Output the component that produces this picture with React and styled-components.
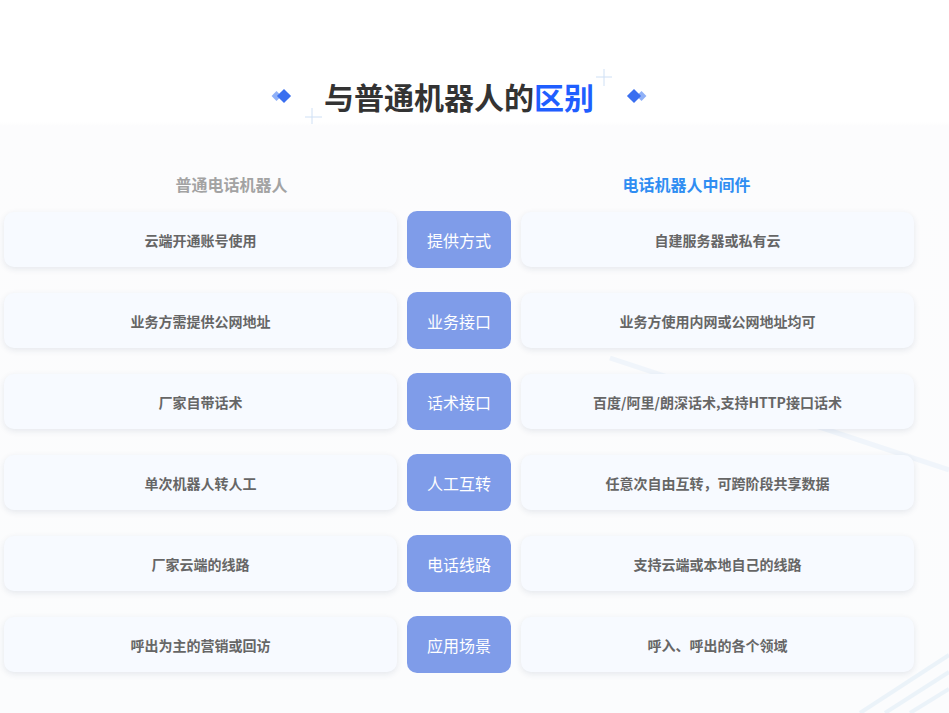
import React from 'react';
import styled, { createGlobalStyle } from 'styled-components';

const GlobalStyle = createGlobalStyle`
  body {
    margin: 0;
    font-family: "Noto Sans CJK SC", "Noto Sans", sans-serif;
    background: #ffffff;
  }
`;

const Page = styled.div`
  position: relative;
  width: 949px;
  height: 713px;
  overflow: hidden;
  background: linear-gradient(180deg, #ffffff 0, #ffffff 122px, #fcfcfd 126px, #fbfcfd 100%);
`;

const Deco = styled.svg`
  position: absolute;
  left: 0;
  top: 0;
  pointer-events: none;
`;

const Content = styled.div`
  position: relative;
  width: 910px;
  margin-left: 4px;
  padding-top: 76px;
`;

const TitleRow = styled.div`
  display: flex;
  align-items: center;
  justify-content: center;
  gap: 32px;
  height: 40px;
`;

const Title = styled.h2`
  margin: 0;
  font-size: 30px;
  line-height: 40px;
  font-weight: 700;
  color: #333333;
  letter-spacing: 0;
`;

const Accent = styled.span`
  color: #1f5eff;
`;

const Diamonds = ({ flip }) => (
  <svg width="22" height="16" viewBox="0 0 22 16" style={{ transform: flip ? 'scaleX(-1)' : 'none' }}>
    <rect x="3" y="4.5" width="7" height="7" transform="rotate(45 6.5 8)" fill="#8fb0f7" />
    <rect x="9" y="3" width="10" height="10" transform="rotate(45 14 8)" fill="#3a6ff0" />
  </svg>
);

const Heads = styled.div`
  display: grid;
  grid-template-columns: 1fr 1fr;
  margin-top: 56px;
`;

const Head = styled.div`
  text-align: center;
  font-size: 16px;
  line-height: 24px;
  font-weight: 700;
  color: ${p => (p.$blue ? '#2f8df2' : '#a3a3a3')};
`;

const Table = styled.div`
  display: grid;
  grid-template-columns: 393px 104px 393px;
  column-gap: 10px;
  row-gap: 24px;
  margin-top: 15px;
`;

const Card = styled.div`
  height: 55px;
  margin-top: 1px;
  border-radius: 10px;
  background: #f7faff;
  box-shadow: 0 2px 6px rgba(30, 50, 90, 0.1);
  display: flex;
  align-items: center;
  justify-content: center;
  font-size: 14px;
  font-weight: 700;
  color: #666666;
`;

const Tag = styled.div`
  height: 57px;
  border-radius: 10px;
  background: #7f9ce9;
  display: flex;
  align-items: center;
  justify-content: center;
  font-size: 16px;
  color: #ffffff;
`;

const rows = [
  ['云端开通账号使用', '提供方式', '自建服务器或私有云'],
  ['业务方需提供公网地址', '业务接口', '业务方使用内网或公网地址均可'],
  ['厂家自带话术', '话术接口', '百度/阿里/朗深话术,支持HTTP接口话术'],
  ['单次机器人转人工', '人工互转', '任意次自由互转，可跨阶段共享数据'],
  ['厂家云端的线路', '电话线路', '支持云端或本地自己的线路'],
  ['呼出为主的营销或回访', '应用场景', '呼入、呼出的各个领域'],
];

export default function App() {
  return (
    <Page>
      <GlobalStyle />
      <Deco width="949" height="713">
        <g stroke="#cfe0f5" strokeWidth="1" fill="none">
          <line x1="596" y1="77" x2="612" y2="77" />
          <line x1="604" y1="69" x2="604" y2="86" />
          <line x1="305" y1="117" x2="322" y2="117" />
          <line x1="312" y1="108" x2="312" y2="124" />
        </g>
        <g stroke="#e6f0fa" strokeWidth="5" opacity="0.5">
          <line x1="610" y1="358" x2="949" y2="470" />
        </g>
        <g stroke="#e2eef8" strokeWidth="4" opacity="0.6">
          <line x1="860" y1="713" x2="949" y2="655" />
          <line x1="885" y1="713" x2="949" y2="672" />
          <line x1="910" y1="713" x2="949" y2="689" />
        </g>
      </Deco>
      <Content>
        <TitleRow>
          <Diamonds />
          <Title>
            与普通机器人的<Accent>区别</Accent>
          </Title>
          <Diamonds flip />
        </TitleRow>
        <Heads>
          <Head>普通电话机器人</Head>
          <Head $blue>电话机器人中间件</Head>
        </Heads>
        <Table>
          {rows.map(([a, b, c]) => (
            <React.Fragment key={b}>
              <Card>{a}</Card>
              <Tag>{b}</Tag>
              <Card>{c}</Card>
            </React.Fragment>
          ))}
        </Table>
      </Content>
    </Page>
  );
}
